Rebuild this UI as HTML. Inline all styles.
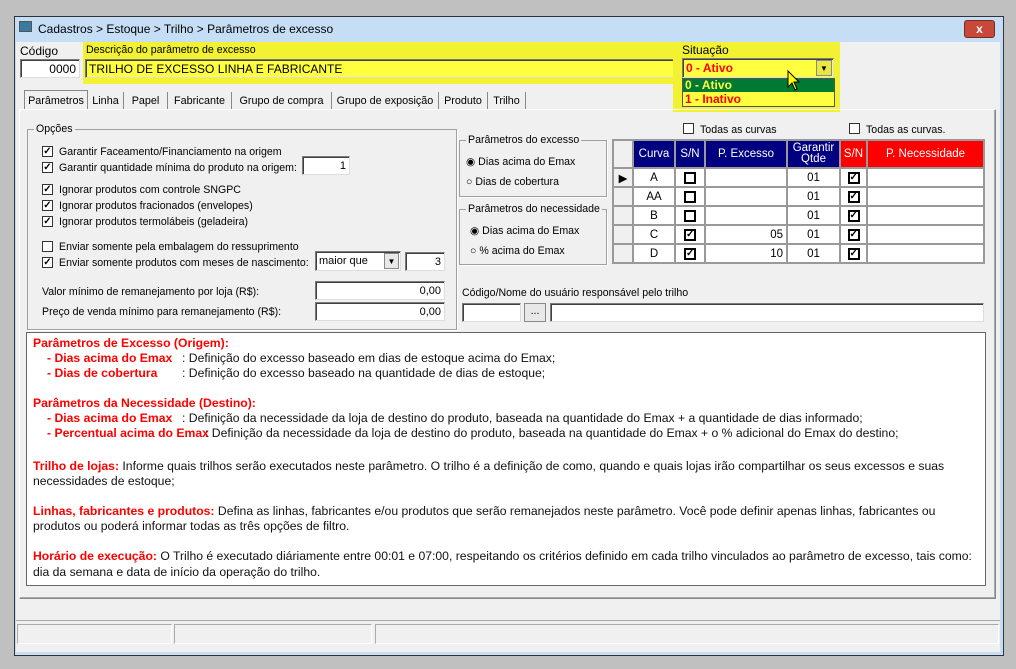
<html><head><style>
*{box-sizing:border-box}
body{margin:0;width:1016px;height:669px;background:#c0c0c0;font-family:"Liberation Sans",sans-serif;font-size:10.6px;color:#000;position:relative;overflow:hidden}
.a{position:absolute;white-space:nowrap}
.in{position:absolute;background:#fff;border:1px solid #7a7a7a;border-right-color:#ddd;border-bottom-color:#ddd;box-shadow:inset 1px 1px 0 #404040;font-size:11px;padding:3px 3px 0;text-align:right;line-height:13px;white-space:nowrap}
.cb{position:absolute;width:11px;height:11px;border:1px solid #333;background:#fff;font-size:10px;line-height:9px;text-align:center;font-weight:bold}
.grp{position:absolute;border:1px solid #a0a0a0;box-shadow:1px 1px 0 #fff}
.gl{position:absolute;top:-7px;left:6px;background:#f0f0f0;padding:0 2px;white-space:nowrap}
.tab{position:absolute;top:92px;height:18px;padding-top:3px;border-right:1px solid #888;font-size:10.8px;text-align:center;white-space:nowrap}
.m{position:absolute;left:33px;font-size:12.2px;white-space:nowrap;color:#111}
.r{color:#f00;font-weight:bold}
table{border-collapse:collapse;position:absolute;left:612px;top:139px;font-size:11.5px}
td{border:2px solid #999;text-align:center;height:19px;padding:0 3px;background:#fff}
th{font-weight:normal;color:#fff;background:#000080;border:2px solid #999;height:28px;line-height:11px}
.k{display:inline-block;width:12px;height:12px;border:2px solid #000;font-size:10px;line-height:8px;font-weight:bold;vertical-align:middle}
</style></head><body>
<div class="a" style="left:14px;top:16px;width:990px;height:640px;background:#c5def5;border:1px solid #333"></div>
<div class="a" style="left:19px;top:21px;width:13px;height:11px;background:#3a7aa0;border:1px solid #555"></div>
<div class="a" style="left:38px;top:22px;font-size:12px">Cadastros &gt; Estoque &gt; Trilho &gt; Parâmetros de excesso</div>
<div class="a" style="left:964px;top:20px;width:31px;height:18px;background:#c8483a;border:1px solid #7a2a20;border-radius:3px;color:#fff;text-align:center;font-weight:bold;font-size:12px;line-height:16px">x</div>
<div class="a" style="left:16px;top:42px;width:984px;height:610px;background:#f0f0f0"></div>
<div class="a" style="left:20px;top:44px;font-size:12px">Código</div>
<div class="in" style="left:20px;top:59px;width:60px;height:19px;font-size:12px">0000</div>
<div class="a" style="left:83px;top:42px;width:597px;height:42px;background:#f2f232"></div>
<div class="a" style="left:86px;top:44px">Descrição do parâmetro de excesso</div>
<div class="in" style="left:85px;top:59px;width:594px;height:19px;background:#ffff40;text-align:left;font-size:12px">TRILHO DE EXCESSO LINHA E FABRICANTE</div>
<div class="a" style="left:673px;top:42px;width:167px;height:70px;background:#f2f232"></div>
<div class="a" style="left:682px;top:43px;font-size:12px">Situação</div>
<div class="in" style="left:682px;top:58px;width:152px;height:20px;background:#ffff40;text-align:left;color:#f00;font-weight:bold;font-size:12px">0 - Ativo</div>
<div class="a" style="left:816px;top:60px;width:16px;height:16px;background:#e8e840;border:1px solid #888;font-size:8px;text-align:center;line-height:15px">▼</div>
<div class="a" style="left:682px;top:78px;width:153px;height:29px;border:1px solid #555;background:#ffff40"></div>
<div class="a" style="left:683px;top:79px;width:151px;height:13px;background:#007a33;color:#ffff40;font-weight:bold;font-size:12px;padding-left:2px;line-height:13px">0 - Ativo</div>
<div class="a" style="left:683px;top:92px;color:#f00;font-weight:bold;font-size:12px;padding-left:2px;line-height:14px">1 - Inativo</div>
<svg class="a" style="left:787px;top:70px" width="14" height="22" viewBox="0 0 14 22"><path d="M1 1 L1 17 L5 13 L8 20 L10 19 L7 12 L12 12 Z" fill="#ff0" stroke="#000"/></svg>
<div class="tab" style="left:24px;top:90px;width:64px;height:20px;background:#f0f0f0;border:1px solid #888;border-bottom:none;padding-top:4px">Parâmetros</div>
<div class="tab" style="left:88px;width:36px">Linha</div><div class="tab" style="left:124px;width:44px">Papel</div><div class="tab" style="left:168px;width:64px">Fabricante</div><div class="tab" style="left:232px;width:100px">Grupo de compra</div><div class="tab" style="left:332px;width:107px">Grupo de exposição</div><div class="tab" style="left:439px;width:49px">Produto</div><div class="tab" style="left:488px;width:38px">Trilho</div>
<div class="a" style="left:19px;top:109px;width:977px;height:490px;border:1px solid #888;border-top-color:#fff;border-left-color:#fff;box-shadow:inset -1px -1px 0 #aaa"></div>
<div class="grp" style="left:27px;top:129px;width:430px;height:201px"><span class="gl">Opções</span></div>
<div class="cb" style="left:42px;top:146px">✓</div><div class="a" style="left:59px;top:146px">Garantir Faceamento/Financiamento na origem</div>
<div class="cb" style="left:42px;top:162px">✓</div><div class="a" style="left:59px;top:162px">Garantir quantidade mínima do produto na origem:</div>
<div class="in" style="left:302px;top:156px;width:48px;height:19px">1</div>
<div class="cb" style="left:42px;top:184px">✓</div><div class="a" style="left:59px;top:184px">Ignorar produtos com controle SNGPC</div>
<div class="cb" style="left:42px;top:200px">✓</div><div class="a" style="left:59px;top:200px">Ignorar produtos fracionados (envelopes)</div>
<div class="cb" style="left:42px;top:216px">✓</div><div class="a" style="left:59px;top:216px">Ignorar produtos termolábeis (geladeira)</div>
<div class="cb" style="left:42px;top:241px"></div><div class="a" style="left:59px;top:241px">Enviar somente pela embalagem do ressuprimento</div>
<div class="cb" style="left:42px;top:257px">✓</div><div class="a" style="left:59px;top:257px">Enviar somente produtos com meses de nascimento:</div>
<div class="in" style="left:315px;top:251px;width:86px;height:20px;text-align:left">maior que</div>
<div class="a" style="left:384px;top:253px;width:15px;height:16px;background:#e8e8e8;border:1px solid #888;font-size:8px;text-align:center;line-height:15px">▼</div>
<div class="in" style="left:405px;top:252px;width:40px;height:19px">3</div>
<div class="a" style="left:42px;top:286px">Valor mínimo de remanejamento por loja (R$):</div>
<div class="in" style="left:315px;top:281px;width:130px;height:19px">0,00</div>
<div class="a" style="left:42px;top:306px">Preço de venda mínimo para remanejamento (R$):</div>
<div class="in" style="left:315px;top:302px;width:130px;height:19px">0,00</div>
<div class="grp" style="left:459px;top:140px;width:148px;height:57px"><span class="gl">Parâmetros do excesso</span></div>
<div class="a" style="left:466px;top:156px">◉ Dias acima do Emax</div><div class="a" style="left:466px;top:176px">○ Dias de cobertura</div>
<div class="grp" style="left:459px;top:209px;width:148px;height:56px"><span class="gl">Parâmetros do necessidade</span></div>
<div class="a" style="left:470px;top:225px">◉ Dias acima do Emax</div><div class="a" style="left:470px;top:245px">○ % acima do Emax</div>
<div class="cb" style="left:683px;top:123px"></div><div class="a" style="left:700px;top:124px">Todas as curvas</div>
<div class="cb" style="left:849px;top:123px"></div><div class="a" style="left:866px;top:124px">Todas as curvas.</div>
<table>
<tr><th style="width:20px;background:#f0f0f0"></th><th style="width:42px">Curva</th><th style="width:30px">S/N</th><th style="width:82px">P. Excesso</th><th style="width:53px">Garantir<br>Qtde</th><th style="width:27px;background:#f00">S/N</th><th style="width:117px;background:#f00">P. Necessidade</th></tr>
<tr><td style="background:#f0f0f0">▶</td><td>A</td><td><span class="k"></span></td><td></td><td>01</td><td><span class="k">✓</span></td><td></td></tr>
<tr><td style="background:#f0f0f0"></td><td>AA</td><td><span class="k"></span></td><td></td><td>01</td><td><span class="k">✓</span></td><td></td></tr>
<tr><td style="background:#f0f0f0"></td><td>B</td><td><span class="k"></span></td><td></td><td>01</td><td><span class="k">✓</span></td><td></td></tr>
<tr><td style="background:#f0f0f0"></td><td>C</td><td><span class="k">✓</span></td><td style="text-align:right">05</td><td>01</td><td><span class="k">✓</span></td><td></td></tr>
<tr><td style="background:#f0f0f0"></td><td>D</td><td><span class="k">✓</span></td><td style="text-align:right">10</td><td>01</td><td><span class="k">✓</span></td><td></td></tr>
</table>
<div class="a" style="left:462px;top:287px">Código/Nome do usuário responsável pelo trilho</div>
<div class="in" style="left:462px;top:303px;width:59px;height:19px"></div>
<div class="a" style="left:524px;top:303px;width:22px;height:19px;border:1px solid #888;background:#e8e8e8;text-align:center;line-height:15px">...</div>
<div class="in" style="left:550px;top:303px;width:434px;height:19px"></div>
<div class="a" style="left:26px;top:332px;width:960px;height:254px;background:#fff;border:1px solid #666"></div>
<div class="m" style="top:336px"><span class="r">Parâmetros de Excesso (Origem):</span></div>
<div class="m" style="top:351px;left:47px"><span class="r">- Dias acima do Emax</span></div><div class="m" style="top:351px;left:182px">: Definição do excesso baseado em dias de estoque acima do Emax;</div>
<div class="m" style="top:366px;left:47px"><span class="r">- Dias de cobertura</span></div><div class="m" style="top:366px;left:182px">: Definição do excesso baseado na quantidade de dias de estoque;</div>
<div class="m" style="top:396px"><span class="r">Parâmetros da Necessidade (Destino):</span></div>
<div class="m" style="top:411px;left:47px"><span class="r">- Dias acima do Emax</span></div><div class="m" style="top:411px;left:182px">: Definição da necessidade da loja de destino do produto, baseada na quantidade do Emax + a quantidade de dias informado;</div>
<div class="m" style="top:426px;left:47px"><span class="r">- Percentual acima do Emax</span></div><div class="m" style="top:426px;left:205px">: Definição da necessidade da loja de destino do produto, baseada na quantidade do Emax + o % adicional do Emax do destino;</div>
<div class="m" style="top:459px"><span class="r">Trilho de lojas:</span> Informe quais trilhos serão executados neste parâmetro. O trilho é a definição de como, quando e quais lojas irão compartilhar os seus excessos e suas</div>
<div class="m" style="top:474px">necessidades de estoque;</div>
<div class="m" style="top:504px"><span class="r">Linhas, fabricantes e produtos:</span> Defina as linhas, fabricantes e/ou produtos que serão remanejados neste parâmetro. Você pode definir apenas linhas, fabricantes ou</div>
<div class="m" style="top:519px">produtos ou poderá informar todas as três opções de filtro.</div>
<div class="m" style="top:549px"><span class="r">Horário de execução:</span> O Trilho é executado diáriamente entre 00:01 e 07:00, respeitando os critérios definido em cada trilho vinculados ao parâmetro de excesso, tais como:</div>
<div class="m" style="top:565px">dia da semana e data de início da operação do trilho.</div>
<div class="a" style="left:16px;top:620px;width:984px;height:1px;background:#aaa"></div>
<div class="a" style="left:17px;top:624px;width:155px;height:20px;border:1px solid #aaa;border-right-color:#fff;border-bottom-color:#fff"></div>
<div class="a" style="left:174px;top:624px;width:198px;height:20px;border:1px solid #aaa;border-right-color:#fff;border-bottom-color:#fff"></div>
<div class="a" style="left:375px;top:624px;width:624px;height:20px;border:1px solid #aaa;border-right-color:#fff;border-bottom-color:#fff"></div>
</body></html>
